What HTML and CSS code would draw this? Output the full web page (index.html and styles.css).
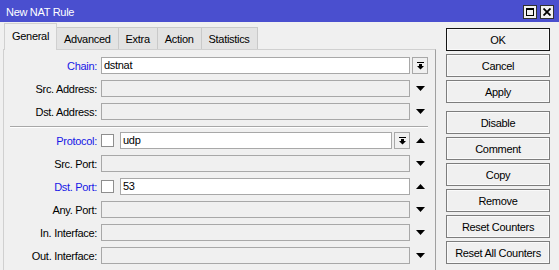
FILE: index.html
```html
<!DOCTYPE html>
<html lang="en">
<head>
  <meta charset="UTF-8">
  <title>New NAT Rule</title>
  <link rel="stylesheet" href="styles.css">
</head>
<body>
  <div class="window">
    <div class="titlebar">
      <span class="title">New NAT Rule</span>
      <div class="win-btns">
        <span class="win-btn">
          <svg width="8" height="8" viewBox="0 0 8 8"><path d="M0 0h8v8H0zM1 2v5h6V2z" fill-rule="evenodd"/></svg>
        </span>
        <span class="win-btn">
          <svg width="8" height="8" viewBox="0 0 8 8"><path d="M0.5 0.5l7 7M7.5 0.5l-7 7" stroke="#000" stroke-width="1.8"/></svg>
        </span>
      </div>
    </div>
    <div class="content">
      <div class="editor">
        <div class="tabs">
          <div class="tab active">General</div>
          <div class="tab">Advanced</div>
          <div class="tab">Extra</div>
          <div class="tab">Action</div>
          <div class="tab">Statistics</div>
        </div>
        <div class="panel">
          <div class="row">
            <label class="blue">Chain:</label>
            <div class="field on">dstnat</div>
            <div class="cell">
              <span class="drop"><svg width="7" height="8" viewBox="0 0 7 8"><path d="M0 0h7v1H0zM2 2h3v2h2L3.5 7.5 0 4h2z"/></svg></span>
            </div>
          </div>
          <div class="row">
            <label>Src. Address:</label>
            <div class="field"></div>
            <div class="cell"><svg class="tri" width="9" height="5" viewBox="0 0 9 5"><path d="M0 0h9L4.5 5z"/></svg></div>
          </div>
          <div class="row">
            <label>Dst. Address:</label>
            <div class="field"></div>
            <div class="cell"><svg class="tri" width="9" height="5" viewBox="0 0 9 5"><path d="M0 0h9L4.5 5z"/></svg></div>
          </div>
          <div class="sep"></div>
          <div class="row">
            <label class="blue">Protocol:</label>
            <span class="check"></span>
            <div class="field on">udp</div>
            <span class="drop inline"><svg width="7" height="8" viewBox="0 0 7 8"><path d="M0 0h7v1H0zM2 2h3v2h2L3.5 7.5 0 4h2z"/></svg></span>
            <div class="cell"><svg class="tri" width="9" height="5" viewBox="0 0 9 5"><path d="M0 5h9L4.5 0z"/></svg></div>
          </div>
          <div class="row">
            <label>Src. Port:</label>
            <div class="field"></div>
            <div class="cell"><svg class="tri" width="9" height="5" viewBox="0 0 9 5"><path d="M0 0h9L4.5 5z"/></svg></div>
          </div>
          <div class="row">
            <label class="blue">Dst. Port:</label>
            <span class="check"></span>
            <div class="field on">53</div>
            <div class="cell"><svg class="tri" width="9" height="5" viewBox="0 0 9 5"><path d="M0 5h9L4.5 0z"/></svg></div>
          </div>
          <div class="row">
            <label>Any. Port:</label>
            <div class="field"></div>
            <div class="cell"><svg class="tri" width="9" height="5" viewBox="0 0 9 5"><path d="M0 0h9L4.5 5z"/></svg></div>
          </div>
          <div class="row">
            <label>In. Interface:</label>
            <div class="field"></div>
            <div class="cell"><svg class="tri" width="9" height="5" viewBox="0 0 9 5"><path d="M0 0h9L4.5 5z"/></svg></div>
          </div>
          <div class="row">
            <label>Out. Interface:</label>
            <div class="field"></div>
            <div class="cell"><svg class="tri" width="9" height="5" viewBox="0 0 9 5"><path d="M0 0h9L4.5 5z"/></svg></div>
          </div>
        </div>
      </div>
      <div class="actions">
        <button class="btn default">OK</button>
        <button class="btn">Cancel</button>
        <button class="btn spaced">Apply</button>
        <button class="btn">Disable</button>
        <button class="btn">Comment</button>
        <button class="btn">Copy</button>
        <button class="btn">Remove</button>
        <button class="btn">Reset Counters</button>
        <button class="btn">Reset All Counters</button>
      </div>
    </div>
  </div>
</body>
</html>
```

FILE: styles.css
```css
/* Base */
* { box-sizing: border-box; margin: 0; padding: 0; }
body {
  font-family: "Liberation Sans", Arial, sans-serif;
  font-size: 11px;
  letter-spacing: -0.3px;
  color: #000;
  background: #f0f0f0;
  width: 559px;
  height: 270px;
  overflow: hidden;
}
.window {
  display: flex;
  flex-direction: column;
  height: 270px;
}

/* Title bar */
.titlebar {
  height: 22px;
  background: #4a4fcf;
  color: #fff;
  display: flex;
  align-items: center;
  justify-content: space-between;
  padding: 0 5px 0 6px;
}
.title { font-size: 11px; padding-top: 2px; }
.win-btns { display: flex; gap: 3px; margin-top: 1px; }
.win-btn {
  width: 14px;
  height: 14px;
  background: #f0f0f0;
  border: 1px solid #303030;
  display: flex;
  align-items: center;
  justify-content: center;
}

/* Main area */
.content {
  flex: 1;
  display: flex;
}
.editor {
  width: 433px;
  margin-left: 3px;
  padding-top: 1px;
  display: flex;
  flex-direction: column;
}
.tabs {
  height: 26px;
  display: flex;
  align-items: flex-end;
  padding-left: 1px;
}
.tab {
  height: 22px;
  padding: 0 7px;
  background: #e3e3e3;
  border: 1px solid #c9c9c9;
  border-bottom: none;
  margin-left: -1px;
  display: flex;
  align-items: center;
  padding-top: 1px;
}
.tab:first-child { margin-left: 0; }
.tab.active {
  height: 27px;
  margin-bottom: -1px;
  background: #f0f0f0;
  border-color: #d0d0d0;
  padding-top: 0;
  padding-bottom: 3px;
  position: relative;
  z-index: 1;
}
.panel {
  flex: 1;
  border: 1px solid #d0d0d0;
  border-right-color: #a0a0a0;
  border-bottom: none;
  padding: 7px 7px 0 0;
}

/* Form rows */
.row {
  display: flex;
  align-items: center;
  height: 17px;
  margin-bottom: 6px;
}
.row label {
  width: 93px;
  margin-right: 4px;
  text-align: right;
}
.row label.blue { color: #1717e6; }
.field {
  flex: 1;
  height: 17px;
  border: 1px solid #a8a8a8;
  background: #f0f0f0;
  padding-left: 2px;
  line-height: 15px;
}
.field.on { background: #fff; }
.check {
  width: 13px;
  height: 13px;
  border: 1px solid #8e8e8e;
  background: #fff;
  margin-right: 6px;
}
.cell {
  width: 18px;
  height: 17px;
  display: flex;
  align-items: center;
  padding-left: 6px;
}
.cell .drop { margin-left: -4px; }
.drop {
  width: 16px;
  height: 17px;
  border: 1px solid #a8a8a8;
  background: #f0f0f0;
  display: flex;
  align-items: center;
  justify-content: center;
}
.drop.inline { margin-left: 2px; }
.tri { display: block; }
.sep {
  margin: 2px 0 4px 6px;
  border-top: 1px solid #a8a8a8;
  border-bottom: 1px solid #fff;
}

/* Action buttons */
.actions {
  margin-left: 10px;
  margin-top: 6px;
  width: 104px;
  display: flex;
  flex-direction: column;
  gap: 3px;
}
.btn {
  height: 23px;
  font-family: inherit;
  font-size: 11px;
  letter-spacing: -0.3px;
  color: #000;
  background: #f0f0f0;
  border: 1px solid #7d7d7d;
  box-shadow: inset 0 0 0 1px #fafafa;
}
.btn.default { border-color: #141414; }
.btn.spaced { margin-bottom: 5px; }
```
